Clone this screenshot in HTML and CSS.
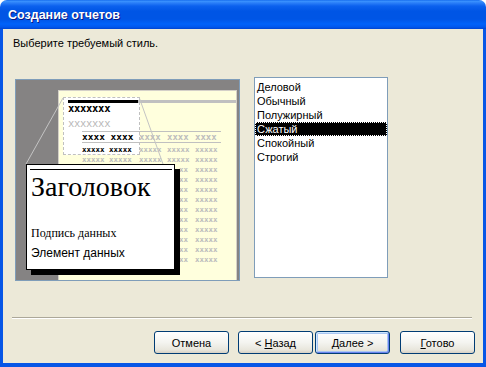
FILE: index.html
```html
<!DOCTYPE html>
<html lang="ru">
<head>
  <meta charset="UTF-8" />
  <title>Создание отчетов</title>
  <link rel="stylesheet" href="styles.css">
</head>
<body>
  <div class="window">
    <div class="titlebar"><span class="title">Создание отчетов</span></div>
    <div class="frame">
      <p class="prompt">Выберите требуемый стиль.</p>

      <div class="main">
        <div class="preview">
          <div class="paper">
            <div class="focus"></div>
            <div class="topbar"><span class="bar-black"></span><span class="bar-gray"></span></div>
            <div class="hdr">xxxxxxx</div>
            <div class="hdr light">xxxxxxx</div>
            <div class="grid">
              <div class="trow head"><span class="dark">xxxx xxxx</span><span>xxxx</span><span>xxxx</span><span>xxxx</span></div>
              <div class="trow first"><span class="dark">xxxxx xxxxx</span><span>xxxxx</span><span>xxxxx</span><span>xxxxx</span></div>
              <div class="trow"><span>xxxxx xxxxx</span><span>xxxxx</span><span>xxxxx</span><span>xxxxx</span></div>
              <!-- rows below lie under the callout: only the visible tail is drawn -->
              <div class="trow hidden"><span></span><span></span><span class="tail">xx</span><span>xxxxx</span></div>
              <div class="trow hidden"><span></span><span></span><span class="tail">xx</span><span>xxxxx</span></div>
              <div class="trow hidden"><span></span><span></span><span class="tail">xx</span><span>xxxxx</span></div>
              <div class="trow hidden"><span></span><span></span><span class="tail">xx</span><span>xxxxx</span></div>
              <div class="trow hidden"><span></span><span></span><span class="tail">xx</span><span>xxxxx</span></div>
              <div class="trow hidden"><span></span><span></span><span class="tail">xx</span><span>xxxxx</span></div>
              <div class="trow hidden"><span></span><span></span><span class="tail">xx</span><span>xxxxx</span></div>
              <div class="trow hidden"><span></span><span></span><span class="tail">xx</span><span>xxxxx</span></div>
              <div class="trow hidden"><span></span><span></span><span class="tail">xx</span><span>xxxxx</span></div>
              <div class="trow hidden"><span></span><span></span><span class="tail">xx</span><span>xxxxx</span></div>
            </div>
          </div>

          <svg class="zoomlines" width="223" height="200" viewBox="0 0 223 200">
            <line x1="47" y1="18" x2="10" y2="84" />
            <line x1="123" y1="17" x2="147" y2="84" />
          </svg>

          <div class="callout">
            <div class="rule"></div>
            <div class="c-title">Заголовок</div>
            <div class="c-label">Подпись данных</div>
            <div class="c-field">Элемент данных</div>
          </div>
        </div>

        <ul class="listbox">
          <li>Деловой</li>
          <li>Обычный</li>
          <li>Полужирный</li>
          <li class="selected">Сжатый</li>
          <li>Спокойный</li>
          <li>Строгий</li>
        </ul>
      </div>

      <div class="separator"></div>

      <div class="buttons">
        <button class="btn">Отмена</button>
        <button class="btn back">&lt; <u>Н</u>азад</button>
        <button class="btn default"><u>Д</u>алее &gt;</button>
        <button class="btn finish"><u>Г</u>отово</button>
      </div>
    </div>
  </div>
</body>
</html>
```

FILE: styles.css
```css
* {
  box-sizing: border-box;
}

body {
  margin: 0;
  background: #ffffff;
  font-family: "Liberation Sans", Arial, sans-serif;
  font-size: 11px;
  color: #000;
}

.window {
  width: 486px;
  height: 367px;
  display: flex;
  flex-direction: column;
}

.titlebar {
  height: 29px;
  border-radius: 7px 7px 0 0;
  background: linear-gradient(#0a5fe8 0, #3d95ff 1px, #2a7ef8 3px, #0c61ee 6px, #0055e5 11px, #0055e5 19px, #0062fa 24px, #0058ee 27px, #0044d0 29px);
  padding: 0 8px;
  display: flex;
  align-items: center;
}

.title {
  color: #fff;
  font-weight: bold;
  font-size: 12.5px;
  text-shadow: 1px 1px #0a1883;
  margin-top: 1px;
}

.frame {
  flex: 1;
  background: #ece9d8;
  border: 3px solid #0756e6;
  border-top: 0;
  border-bottom-width: 4px;
  display: flex;
  flex-direction: column;
}

.prompt {
  margin: 7px 0 0 10px;
  line-height: 14px;
}

.main {
  display: flex;
  align-items: flex-start;
  gap: 14px;
  margin: 27px 0 0 12px;
}

/* report preview */

.preview {
  position: relative;
  width: 225px;
  height: 202px;
  margin-top: 2px;
  border: 1px solid #7f9db9;
  background: #858383;
  overflow: hidden;
}

.paper {
  position: relative;
  z-index: 0;
  height: 220px;
  margin: 10px 2px 0 42px;
  border: 1px solid #d4d0c8;
  background: #ffffdd;
  padding: 9px 0 0 9px;
  font-family: "DejaVu Sans Mono", monospace;
}

.focus {
  position: absolute;
  z-index: -1;
  left: 4px;
  top: 6px;
  width: 77px;
  height: 58px;
  border: 1px dashed #c0c0c0;
  background: #fff;
}

.topbar {
  display: flex;
  height: 3px;
}

.bar-black {
  width: 70px;
  background: #000;
}

.bar-gray {
  flex: 1;
  background: #c0c0c0;
}

.hdr {
  font-size: 10.5px;
  font-weight: bold;
  line-height: 10px;
  height: 10px;
  letter-spacing: -0.3px;
}

.hdr.light {
  margin-top: 5px;
  color: #b8b8b8;
  font-weight: normal;
}

.grid {
  width: 139px;
  margin: 3px 0 0 14px;
}

.trow {
  display: grid;
  grid-template-columns: 57px 28px 28px 26px;
  height: 10px;
  line-height: 10px;
  font-size: 7.5px;
  font-weight: bold;
  color: #bdbdbd;
  white-space: nowrap;
  overflow: hidden;
}

.trow.head {
  height: 12px;
  font-size: 9px;
  border-top: 1px solid #c0c0c0;
  border-bottom: 1px solid #c0c0c0;
}

.trow.head .dark {
  font-size: 9.5px;
}

.trow.first {
  margin-top: 2px;
}

.trow .dark {
  color: #000;
}

.trow .tail {
  padding-left: 12px;
}

.zoomlines {
  position: absolute;
  left: 0;
  top: 0;
}

.zoomlines line {
  stroke: #c4c4c4;
  stroke-width: 1;
}

.callout {
  position: absolute;
  left: 10px;
  top: 84px;
  width: 149px;
  height: 106px;
  border: 1px solid #000;
  background: #fff;
  box-shadow: 5px 5px 0 #000;
  padding-left: 3px;
}

.rule {
  margin: 4px 2px 0 0;
  border-top: 1px solid #000;
}

.c-title {
  margin-top: 2px;
  padding-left: 1px;
  font-family: "Liberation Serif", "Times New Roman", serif;
  font-size: 28px;
  line-height: 30px;
}

.c-label {
  margin-top: 24px;
  padding-left: 1px;
  font-family: "Liberation Serif", "Times New Roman", serif;
  font-size: 12px;
  line-height: 14px;
}

.c-field {
  margin-top: 6px;
  padding-left: 1px;
  font-size: 12px;
  line-height: 14px;
}

/* style list */

.listbox {
  list-style: none;
  margin: 0;
  width: 134px;
  height: 201px;
  border: 1px solid #7f9db9;
  background: #fff;
  padding: 2px 0 0;
}

.listbox li {
  height: 14px;
  line-height: 14px;
  padding-left: 2px;
}

.listbox li.selected {
  background: #000;
  color: #fff;
  outline: 1px dotted #fff;
  outline-offset: -1px;
}

/* footer */

.separator {
  margin: 36px 11px 0 9px;
  border-top: 1px solid #aca899;
  border-bottom: 1px solid #fff;
}

.buttons {
  display: flex;
  justify-content: flex-end;
  margin-top: 12px;
  padding-right: 8px;
}

.btn {
  width: 75px;
  height: 23px;
  padding: 0;
  border: 1px solid #003c74;
  border-radius: 3px;
  background: linear-gradient(#ffffff, #f4f4f0 50%, #e8e6dc 85%, #d6d0c5);
  font-family: "Liberation Sans", Arial, sans-serif;
  font-size: 11px;
  color: #000;
}

.btn.back {
  margin-left: 9px;
}

.btn.default {
  margin-left: 2px;
  box-shadow: inset 1px 1px 0 #cee7ff, inset -1px -1px 0 #6982ee, inset 0 0 0 2px #a9c6f2;
}

.btn.finish {
  margin-left: 10px;
}

.btn u {
  text-decoration: underline;
}
```
